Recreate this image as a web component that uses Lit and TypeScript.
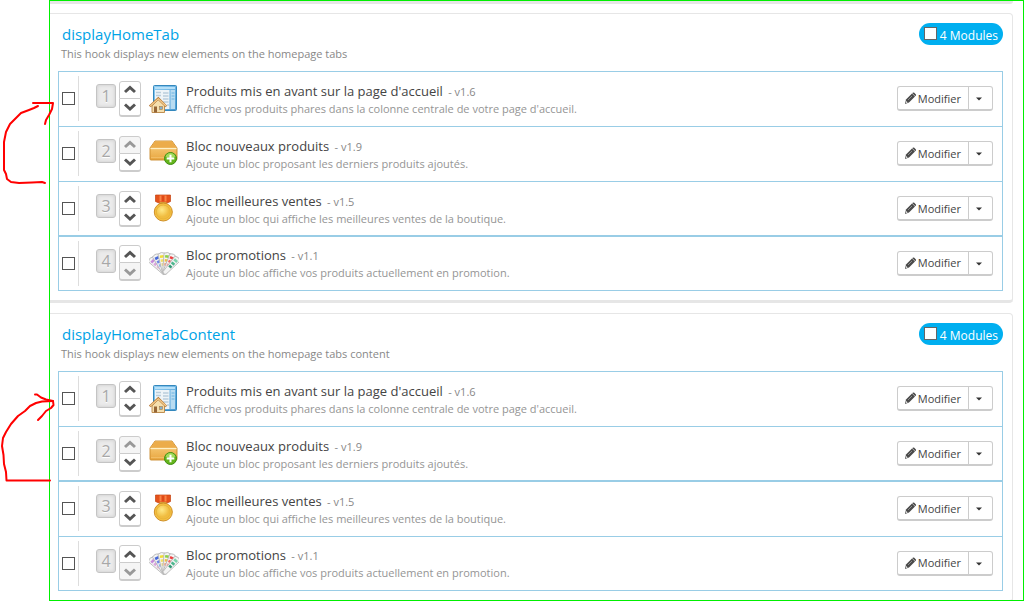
import { LitElement, html, css, svg } from "lit";
import { customElement, property } from "lit/decorators.js";

type IconName = "home" | "box" | "medal" | "palette";

interface Module {
  name: string;
  version: string;
  description: string;
  icon: IconName;
  mutedUp?: boolean;
  mutedDown?: boolean;
}

interface Hook {
  name: string;
  description: string;
  emphasis: number;
}

const MODULES: Module[] = [
  { name: "Produits mis en avant sur la page d'accueil", version: "v1.6", icon: "home",
    description: "Affiche vos produits phares dans la colonne centrale de votre page d'accueil." },
  { name: "Bloc nouveaux produits", version: "v1.9", icon: "box", mutedUp: true,
    description: "Ajoute un bloc proposant les derniers produits ajoutés." },
  { name: "Bloc meilleures ventes", version: "v1.5", icon: "medal",
    description: "Ajoute un bloc qui affiche les meilleures ventes de la boutique." },
  { name: "Bloc promotions", version: "v1.1", icon: "palette", mutedDown: true,
    description: "Ajoute un bloc affiche vos produits actuellement en promotion." },
];

const HOOKS: Hook[] = [
  { name: "displayHomeTab", description: "This hook displays new elements on the homepage tabs", emphasis: 3 },
  { name: "displayHomeTabContent", description: "This hook displays new elements on the homepage tabs content", emphasis: 2 },
];

const blade = (angle: number, colors: string[]) => svg`
  <g transform="rotate(${angle} 15.500 25)">
    <path d="M12 5.500 Q15.500 3 19 5.500 L17.500 25 Q15.500 27.500 13.500 25Z" fill="#f4f4f4" stroke="#b4b4b4" stroke-width=".8"/>
    ${colors.map((c, i) => svg`<rect x="${13.500 + i * 0.2}" y="${7 + i * 4}" width="${4 - i * 0.4}" height="2.600" fill="${c}"/>`)}
  </g>`;

const ICONS = {
  home: svg`
    <linearGradient id="sky" x2="1" y2="1"><stop stop-color="#8fcdf3"/><stop offset="1" stop-color="#4b9bd2"/></linearGradient>
    <rect x="4.500" y="1.500" width="23" height="25" rx="1" fill="url(#sky)" stroke="#3488bd"/>
    <rect x="6" y="6" width="14.500" height="19" fill="#eef4f8"/>
    <rect x="21.500" y="6" width="4.500" height="19" fill="#b9dcf1"/>
    <rect x="6" y="3" width="20" height="2" fill="#b6e0f8"/>
    <path d="M7 8.500h5M7 11.500h5M14 9h5.500M14 12h5.500M14 15h5.500M14 18h5.500M18 21h2" stroke="#bacddb" stroke-width="1.500"/>
    <path d="M22.500 9h3M22.500 12h3M22.500 15h3" stroke="#6cb3e0"/>
    <path d="M3 21.500v7h12.500v-7l-6.300-6z" fill="#f5dfae" stroke="#b98543" stroke-width=".9"/>
    <path d="M.8 22.500 9.300 14.500l8 8" fill="none" stroke="#b67a38" stroke-width="2.400"/>
    <path d="M1.200 22 9.300 14.700 17 22" fill="none" stroke="#f6cc8b" stroke-width="1.200"/>
    <rect x="5" y="22.500" width="3" height="6" fill="#956637"/><rect x="10.500" y="22.500" width="3" height="3" fill="#8ab0c8" stroke="#a77a44" stroke-width=".6"/>`,
  box: svg`
    <linearGradient id="card" y2="1" x2="0"><stop stop-color="#fbd486"/><stop offset="1" stop-color="#e8a640"/></linearGradient>
    <path d="M6 2h17l5 7v11q0 1-1 1H2q-1 0-1-1V9z" fill="url(#card)" stroke="#cb8a2b" stroke-width=".9"/>
    <path d="M6 2.500h17l4.500 6.500h-26z" fill="#ecac4a"/>
    <path d="M1.500 9.500h26" stroke="#fff0c4" stroke-width="1.300"/>
    <path d="M2 18.500h25" stroke="#f1bd65"/>
    <circle cx="21.500" cy="19.500" r="6" fill="#64b51c" stroke="#3f8d12"/>
    <path d="M16.500 17.500a5.300 5.300 0 0 1 10 0q-5 3-10 0z" fill="#a2db5d"/>
    <path d="M21.500 15.700v7.600M17.700 19.500h7.600" stroke="#fff" stroke-width="2"/>`,
  medal: svg`
    <radialGradient id="gold" cx=".4" cy=".35"><stop stop-color="#ffe987"/><stop offset="1" stop-color="#f0bc40"/></radialGradient>
    <path d="M6.500 1h15v6.500L17 9.500h-6L6.500 7.500z" fill="#e5521b" stroke="#c44210" stroke-width=".7"/>
    <path d="M10.500 1.500h7v6h-7z" fill="#fa8446"/><path d="M12.500 1.500h3v6h-3z" fill="#e04a18"/>
    <path d="M10.500 9h7" stroke="#d69d3c" stroke-width="2"/>
    <circle cx="14.300" cy="18" r="9" fill="#f4c043" stroke="#cf8f26"/>
    <circle cx="14.300" cy="18" r="7" fill="url(#gold)" stroke="#e6b136" stroke-width=".8"/>`,
  palette: svg`
    ${blade(-45, ["#c78bdb", "#dba3df", "#e6b8d5"])}
    ${blade(-27, ["#4769d9", "#6c86e6", "#94b4ed"])}
    ${blade(-9, ["#f1dc37", "#f2df67", "#ead887"])}
    ${blade(9, ["#8bd044", "#f0c040", "#f49a7b"])}
    ${blade(26, ["#ee4040", "#f06a6a", "#f0a0a0"])}
    ${blade(42, ["#7ad3ac", "#4eb68e", "#329875"])}`,
};

const chevron = (down: boolean) => html`
  <svg width="14" height="9" viewBox="0 0 14 9" aria-hidden="true">
    <path d=${down ? "M2 2.500l5 4.500L12 2.500" : "M2 7l5-4.500L12 7"} fill="none" stroke="currentColor" stroke-width="3"/>
  </svg>`;

@customElement("module-row")
export class ModuleRow extends LitElement {
  @property({ attribute: false }) module!: Module;
  @property({ type: Number }) position = 1;

  static styles = css`
    :host { display: flex; align-items: center; padding: 0 9px 1px 3px; }
    .check {
      appearance: none; box-sizing: border-box; width: 13px; height: 13px; margin: 0;
      border: 1px solid #555; background: #fff; flex: none;
    }
    .check:checked { background: #00aff0; }
    .rule { width: 1px; height: 45px; margin: 0 17px 0 3px; background: #ddd; flex: none; }
    .position {
      box-sizing: border-box; width: 20px; height: 24px; margin-bottom: 5px; border: 1px solid #c4c4c4; border-radius: 3px;
      background: #ebebeb; box-shadow: inset 0 0 3px 1px #d6d6d6; color: #a8a8a8;
      text-shadow: 0 1px #fff; font-size: 16px; line-height: 22px; text-align: center; flex: none;
    }
    .moves { display: flex; flex-direction: column; width: 22px; margin: 0 8px 0 3px; flex: none; }
    .move {
      display: grid; place-items: center; height: 18px; padding: 0; border: 1px solid #ccc;
      border-radius: 3px 3px 0 0; background: #fff; color: #555;
    }
    .move:last-child { border-radius: 0 0 3px 3px; border-top: 0; border-bottom-width: 2px; }
    .move.muted { color: #999; background: #f5f5f5; }
    .icon { flex: none; margin-right: 7px; }
    .text { flex: 1; min-width: 0; }
    .name { margin: 0; font-size: 13px; font-weight: 400; line-height: 18px; color: #444; }
    .version { margin-left: 2px; font-size: 11px; color: #888; }
    .description { margin: 0; font-size: 11px; line-height: 15px; color: #959595; }
    .actions { display: flex; flex: none; }
    .action {
      display: flex; align-items: center; gap: 2px; height: 25px; box-sizing: border-box; padding: 0 7px;
      font: 11px "Open Sans", sans-serif; color: #444; background: #fff;
      border: 1px solid #ccc; border-bottom-width: 2px; border-radius: 3px 0 0 3px;
    }
    .more { border-left: 0; border-radius: 0 3px 3px 0; width: 24px; justify-content: center; padding: 2px 3px 0 0; }
  `;

  render() {
    const m = this.module;
    return html`
      <input class="check" type="checkbox" aria-label=${m.name} />
      <span class="rule"></span>
      <span class="position">${this.position}</span>
      <div class="moves">
        <button class="move ${m.mutedUp ? "muted" : ""}" aria-label="Monter">${chevron(false)}</button>
        <button class="move ${m.mutedDown ? "muted" : ""}" aria-label="Descendre">${chevron(true)}</button>
      </div>
      <svg class="icon" width="30" height="30" viewBox="0 0 30 30" aria-hidden="true">${ICONS[m.icon]}</svg>
      <div class="text">
        <h3 class="name">${m.name} <span class="version">- ${m.version}</span></h3>
        <p class="description">${m.description}</p>
      </div>
      <div class="actions">
        <button class="action">
          <svg width="11" height="12" viewBox="0 0 11 12" aria-hidden="true">
            <path d="M0 12l1-4.500L7 1.500l3 3-6 6z" fill="#4a4a4a"/>
            <path d="M7.700.8q.8-.8 1.600 0l1.400 1.400q.6.700 0 1.500l-.4.500-3-3z" fill="#4a4a4a"/>
            <path d="M1.300 9l1.400 1.400L1 11z" fill="#fff"/><path d="M3 8l4-4" stroke="#aaa" stroke-width=".7"/>
          </svg>
          Modifier
        </button>
        <button class="action more" aria-label="Plus d'actions">
          <svg width="6" height="4" viewBox="0 0 6 4" aria-hidden="true"><path d="M0 .5h6l-3 3z" fill="#333"/></svg>
        </button>
      </div>`;
  }
}

@customElement("hook-panel")
export class HookPanel extends LitElement {
  @property({ attribute: false }) hook!: Hook;

  static styles = css`
    :host {
      display: block; padding: 9px 9px 9px 8px; border: 1px solid #e6e6e6; border-left: 0;
      border-bottom-width: 3px; border-radius: 0 4px 4px 0; background: #fff;
    }
    .header { display: flex; justify-content: space-between; align-items: flex-start; margin-bottom: 9px; }
    .title { margin: 0 0 0 4px; font-size: 15px; font-weight: 400; line-height: 22px; color: #00a3e6; }
    .description { margin: 0 0 0 3px; font-size: 11px; line-height: 17px; color: #888; }
    .badge {
      display: flex; align-items: center; gap: 3px; height: 22px; padding: 0 5px; border-radius: 11px;
      background: #00aff0; color: #fff; font-size: 12px;
    }
    .check { appearance: none; box-sizing: border-box; width: 13px; height: 13px; margin: 0 0 2px; border: 1px solid #666; background: #fff; }
    .check:checked { background: #0077a3; }
    .count { padding-top: 2px; }
    .list { margin: 0; padding: 0; list-style: none; border: 1px solid #99cde6; }
    .row { display: grid; min-height: 54px; border-bottom: 1px solid #99cde6; }
    .row:last-child { min-height: 53px; border-bottom: 0; }
    .emphasis { box-shadow: inset 0 -1px #99cde6; }
  `;

  render() {
    return html`
      <header class="header">
        <div>
          <h2 class="title">${this.hook.name}</h2>
          <p class="description">${this.hook.description}</p>
        </div>
        <label class="badge"><input class="check" type="checkbox" /><span class="count">${MODULES.length} Modules</span></label>
      </header>
      <ul class="list">
        ${MODULES.map((m, i) => html`
          <li class="row ${this.hook.emphasis === i + 1 ? "emphasis" : ""}">
            <module-row .module=${m} .position=${i + 1}></module-row>
          </li>`)}
      </ul>`;
  }
}

@customElement("app-root")
export class AppRoot extends LitElement {
  static styles = css`
    :host {
      display: block; position: relative; box-sizing: border-box; height: 100vh; padding-left: 49px; overflow: hidden;
      background: #fff; font-family: "Open Sans", sans-serif;
    }
    .frame { box-sizing: border-box; height: 100%; border: 1px solid #00f000; overflow: hidden; }
    .previous { height: 3px; margin-right: 10px; background: #e6e6e6; border-radius: 0 0 4px 0; }
    .panels { display: grid; gap: 10px; padding: 9px 10px 0 0; }
    .marks { position: absolute; left: 0; top: 0; pointer-events: none; }
  `;

  render() {
    return html`
      <main class="frame">
        <div class="previous"></div>
        <div class="panels">${HOOKS.map((h) => html`<hook-panel .hook=${h}></hook-panel>`)}</div>
      </main>
      <svg class="marks" width="60" height="500" viewBox="0 0 60 500" fill="none" stroke="#f00" stroke-width="2" stroke-linecap="round" stroke-linejoin="round" aria-hidden="true">
        <path d="M45 183l-3-1-10 .5-13 .5-8-1-4-3-1-5-2-4V142l2-10 4-8 7-7 4-4 8-3 5-2 4-2"/>
        <path d="M33 103h20l-1 6-3 6-3 5-1 4"/>
        <path d="M50 480.500H6.500L6 472l-2-8-.500-9L2 446l1-8 3-6 5-8 7-8 7-5 5-5 6-3 6-1.500 11-.500"/>
        <path d="M35 394.500h2l4 3 5 2 7 1.500.5 4-2.500 3-5 3-4 5-4 4"/>
      </svg>`;
  }
}
